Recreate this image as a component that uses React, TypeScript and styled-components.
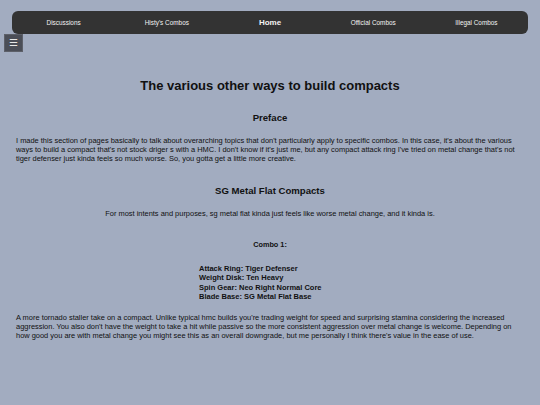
import styled, { createGlobalStyle } from "styled-components";

const GlobalStyle = createGlobalStyle`
  html, body {
    margin: 0;
    padding: 0;
    background: #a2acc0;
  }
  body {
    font-family: "Liberation Sans", Arial, sans-serif;
    color: #111;
    font-size: 7.45px;
  }
`;

const Page = styled.div`
  min-height: 405px;
  padding-top: 11px;
  box-sizing: border-box;
`;

const NavBar = styled.nav`
  margin: 0 12px;
  height: 23px;
  background: #333333;
  border-radius: 6px;
  display: flex;
  align-items: center;
`;

const NavItem = styled.a<{ $active?: boolean }>`
  flex: 1;
  text-align: center;
  color: #f2f2f2;
  text-decoration: none;
  font-size: ${(p) => (p.$active ? "8px" : "6.4px")};
  font-weight: ${(p) => (p.$active ? "bold" : "normal")};
  cursor: pointer;
`;

const MenuButton = styled.button`
  display: flex;
  align-items: center;
  justify-content: center;
  margin: 0 0 0 4px;
  width: 19px;
  height: 18px;
  padding: 0;
  background: #4b4e57;
  border: 1px solid #5d6069;
  color: #e8e8e8;
  font-size: 10px;
  line-height: 1;
  cursor: pointer;
`;

const Content = styled.main`
  padding: 0 16px;
`;

const Title = styled.h1`
  margin: 25px 0 0;
  text-align: center;
  font-size: 13px;
  line-height: 17px;
`;

const SectionTitle = styled.h2<{ $top: number }>`
  margin: ${(p) => p.$top}px 0 0;
  text-align: center;
  font-size: 9.6px;
  line-height: 12px;
`;

const Paragraph = styled.p<{ $top: number; $center?: boolean }>`
  margin: ${(p) => p.$top}px 0 0;
  line-height: 9px;
  text-align: ${(p) => (p.$center ? "center" : "left")};
`;

const ComboTitle = styled.h4`
  margin: 22px 0 0;
  text-align: center;
  font-size: 7.3px;
  line-height: 9px;
`;

const PartsWrap = styled.div`
  display: flex;
  justify-content: center;
  margin-top: 15px;
`;

const PartsList = styled.div`
  width: 142px;
  font-weight: bold;
  font-size: 7.5px;
  line-height: 9.3px;
`;

const parts = [
  "Attack Ring: Tiger Defenser",
  "Weight Disk: Ten Heavy",
  "Spin Gear: Neo Right Normal Core",
  "Blade Base: SG Metal Flat Base",
];

export default function App() {
  return (
    <>
      <GlobalStyle />
      <Page>
        <NavBar>
          <NavItem>Discussions</NavItem>
          <NavItem>Histy's Combos</NavItem>
          <NavItem $active>Home</NavItem>
          <NavItem>Official Combos</NavItem>
          <NavItem>Illegal Combos</NavItem>
        </NavBar>
        <MenuButton>☰</MenuButton>
        <Content>
          <Title>The various other ways to build compacts</Title>
          <SectionTitle $top={18}>Preface</SectionTitle>
          <Paragraph $top={12}>
            I made this section of pages basically to talk about overarching topics that don't
            particularly apply to specific combos. In this case, it's about the various ways to
            build a compact that's not stock driger s with a HMC. I don't know if it's just me, but
            any compact attack ring I've tried on metal change that's not tiger defenser just kinda
            feels so much worse. So, you gotta get a little more creative.
          </Paragraph>
          <SectionTitle $top={22}>SG Metal Flat Compacts</SectionTitle>
          <Paragraph $top={12} $center>
            For most intents and purposes, sg metal flat kinda just feels like worse metal change,
            and it kinda is.
          </Paragraph>
          <ComboTitle>Combo 1:</ComboTitle>
          <PartsWrap>
            <PartsList>
              {parts.map((p) => (
                <div key={p}>{p}</div>
              ))}
            </PartsList>
          </PartsWrap>
          <Paragraph $top={12}>
            A more tornado staller take on a compact. Unlike typical hmc builds you're trading
            weight for speed and surprising stamina considering the increased aggression. You also
            don't have the weight to take a hit while passive so the more consistent aggression over
            metal change is welcome. Depending on how good you are with metal change you might see
            this as an overall downgrade, but me personally I think there's value in the ease of use.
          </Paragraph>
        </Content>
      </Page>
    </>
  );
}
